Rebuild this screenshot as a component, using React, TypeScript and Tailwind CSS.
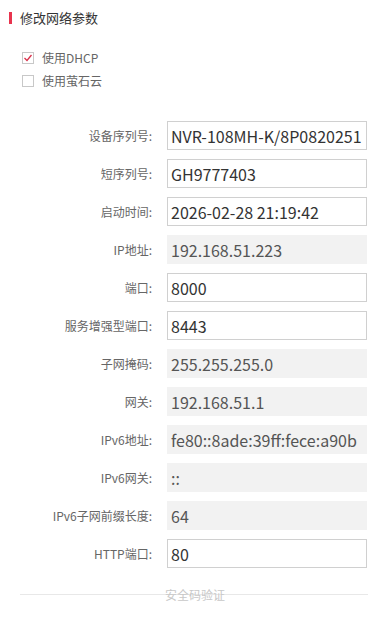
import React from 'react';

const font = { fontFamily: '"Noto Sans CJK SC", "Liberation Sans", sans-serif' };

const fields = [
  { label: '设备序列号:', value: 'NVR-108MH-K/8P0820251', disabled: false },
  { label: '短序列号:', value: 'GH9777403', disabled: false },
  { label: '启动时间:', value: '2026-02-28 21:19:42', disabled: false },
  { label: 'IP地址:', value: '192.168.51.223', disabled: true },
  { label: '端口:', value: '8000', disabled: false },
  { label: '服务增强型端口:', value: '8443', disabled: false },
  { label: '子网掩码:', value: '255.255.255.0', disabled: true },
  { label: '网关:', value: '192.168.51.1', disabled: true },
  { label: 'IPv6地址:', value: 'fe80::8ade:39ff:fece:a90b', disabled: true },
  { label: 'IPv6网关:', value: '::', disabled: true },
  { label: 'IPv6子网前缀长度:', value: '64', disabled: true },
  { label: 'HTTP端口:', value: '80', disabled: false },
];

const Check = ({ checked, label }: { checked: boolean; label: string }) => (
  <label className="flex items-center h-[23px] gap-[8px] text-[12px] text-[#666]">
    <span className="w-[12px] h-[12px] border border-[#c8c8c8] bg-white flex items-center justify-center">
      {checked && (
        <svg width="10" height="10" viewBox="0 0 10 10">
          <path d="M1.5 5 L4 7.5 L8.5 2" fill="none" stroke="#d9304a" strokeWidth="1.3" />
        </svg>
      )}
    </span>
    {label}
  </label>
);

const Row = ({ label, value, disabled }: { label: string; value: string; disabled: boolean }) => (
  <div className="flex items-center h-[29px]">
    <div className="w-[155px] pr-[3px] text-right text-[12px] text-[#666] whitespace-nowrap">{label}</div>
    <div
      className={`ml-[12px] w-[200px] h-[29px] flex items-center px-[3px] text-[16px] whitespace-nowrap overflow-hidden ${
        disabled ? 'bg-[#f2f2f2] text-[#555] border border-[#f2f2f2]' : 'bg-white text-[#333] border border-[#d0d0d0]'
      }`}
    >
      {value}
    </div>
  </div>
);

export default function App() {
  return (
    <div className="w-[388px] h-[637px] bg-white overflow-hidden" style={font}>
      <div className="flex items-center pt-[8px] pl-[9px]">
        <span className="w-[3px] h-[12px] bg-[#e8344e]" />
        <span className="ml-[8px] text-[13px] text-[#333] leading-[20px]">修改网络参数</span>
      </div>
      <div className="pl-[22px] pt-[18px] flex flex-col">
        <Check checked label="使用DHCP" />
        <Check checked={false} label="使用萤石云" />
      </div>
      <div className="flex flex-col gap-[9px] mt-[29px]">
        {fields.map((f) => (
          <Row key={f.label} {...f} />
        ))}
      </div>
      <div className="relative mx-[20px] mt-[26px] h-[1px] bg-[#e8e8e8]">
        <span className="absolute left-[145px] -top-[8px] text-[12px] leading-[18px] text-[#c8c8c8]">安全码验证</span>
      </div>
    </div>
  );
}
